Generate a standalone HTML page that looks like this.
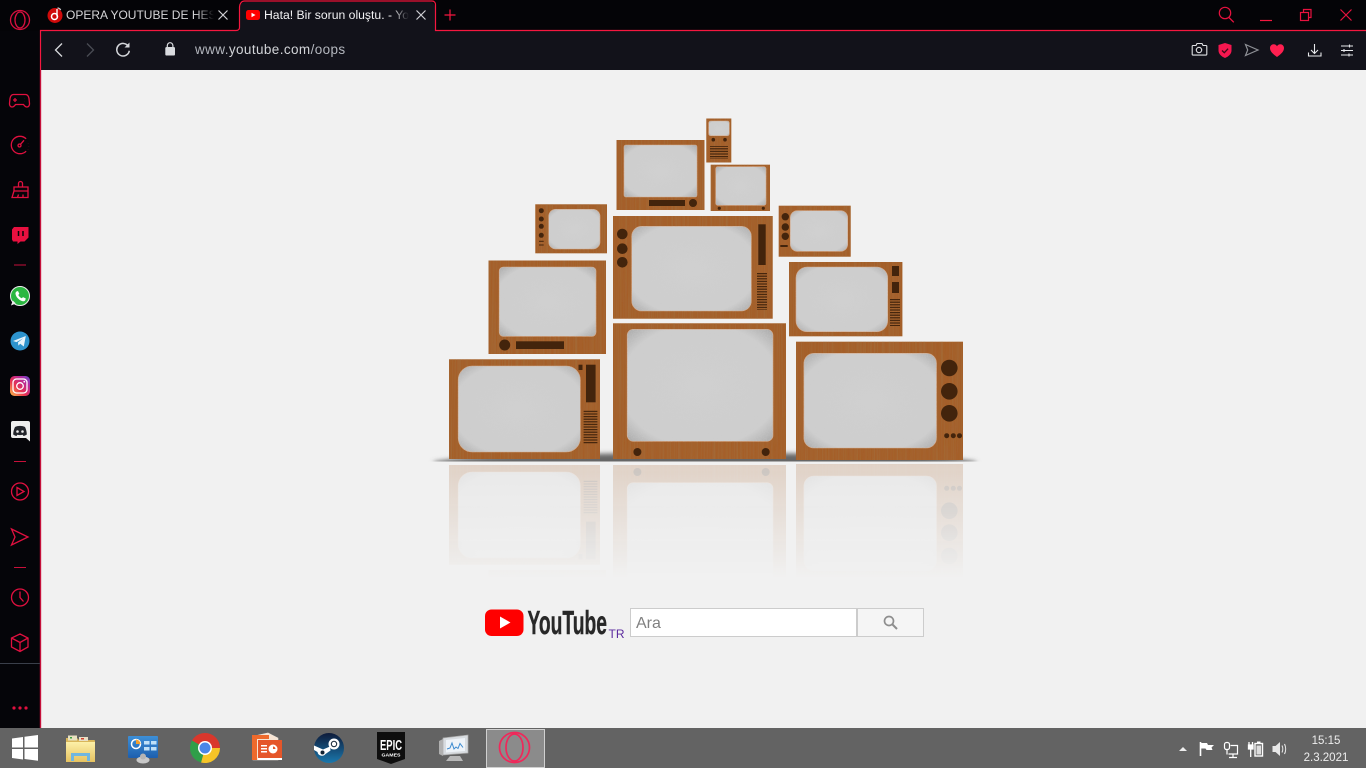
<!DOCTYPE html>
<html><head><meta charset="utf-8"><style>
html,body{margin:0;padding:0;width:1366px;height:768px;overflow:hidden;background:#f1f1f1;font-family:"Liberation Sans",sans-serif}
div{position:absolute;white-space:nowrap}
svg{position:absolute;left:0;top:0}
</style></head><body>
<div style="left:0;top:0;width:1366px;height:31px;background:#040407"></div>
<div style="left:0;top:31px;width:41px;height:697px;background:#050509"></div>
<div style="left:41px;top:31px;width:1325px;height:39px;background:#12121a"></div>
<div style="left:41px;top:70px;width:1325px;height:658px;background:#f1f1f1"></div>
<div style="left:0;top:728px;width:1366px;height:40px;background:#636363"></div>
<div style="left:240px;top:2px;width:195px;height:30px;background:#12121a;border-radius:5px 5px 0 0"></div>
<div style="left:486px;top:729px;width:57px;height:37px;background:#8b8b8b;border:1px solid #d0d0d0"></div>

<svg width="1366" height="768" viewBox="0 0 1366 768" xmlns="http://www.w3.org/2000/svg">
<defs>
<filter id="wood" filterUnits="userSpaceOnUse" x="420" y="100" width="570" height="380">
<feTurbulence type="fractalNoise" baseFrequency="0.7 0.007" numOctaves="2" seed="4" result="n"/>
<feColorMatrix in="n" type="matrix" values="0 0 0 0 0.36  0 0 0 0 0.17  0 0 0 0 0.05  1.2 0 0 0 -0.45" result="d"/>
<feComposite in="d" in2="SourceAlpha" operator="in" result="c"/>
<feMerge><feMergeNode in="SourceGraphic"/><feMergeNode in="c"/></feMerge>
</filter>
<filter id="static" filterUnits="userSpaceOnUse" x="420" y="100" width="570" height="380">
<feTurbulence type="fractalNoise" baseFrequency="0.8" numOctaves="2" seed="9" result="n"/>
<feColorMatrix in="n" type="matrix" values="0 0 0 0 0.62  0 0 0 0 0.62  0 0 0 0 0.62  0.7 0 0 0 -0.28" result="d"/>
<feComposite in="d" in2="SourceAlpha" operator="in" result="c"/>
<feMerge><feMergeNode in="SourceGraphic"/><feMergeNode in="c"/></feMerge>
</filter>
<filter id="bl" x="-5%" y="-100%" width="110%" height="300%"><feGaussianBlur stdDeviation="2.5"/></filter>
<radialGradient id="scr" cx="50%" cy="50%" r="72%"><stop offset="0" stop-color="#d0d0d0"/><stop offset=".76" stop-color="#cecece"/><stop offset="1" stop-color="#a6a6a6"/></radialGradient>
<pattern id="spk" patternUnits="userSpaceOnUse" width="20" height="2.6"><rect width="20" height="1.2" fill="#43240c"/></pattern>
<linearGradient id="rf" gradientUnits="userSpaceOnUse" x1="0" y1="462" x2="0" y2="578"><stop offset="0" stop-color="#fff" stop-opacity=".22"/><stop offset=".45" stop-color="#fff" stop-opacity=".12"/><stop offset="1" stop-color="#fff" stop-opacity="0"/></linearGradient>
<mask id="rm" maskUnits="userSpaceOnUse" x="420" y="460" width="570" height="140"><rect x="420" y="460" width="570" height="140" fill="url(#rf)"/></mask>
<clipPath id="shc"><rect x="400" y="440" width="610" height="21.5"/></clipPath>
<linearGradient id="ig" x1="0" y1="1" x2="1" y2="0"><stop offset="0" stop-color="#fdc14a"/><stop offset=".4" stop-color="#e8304f"/><stop offset=".75" stop-color="#b32aa0"/><stop offset="1" stop-color="#5a4fd0"/></linearGradient>
<linearGradient id="fd" x1="0" y1="0" x2="0" y2="1"><stop offset="0" stop-color="#fdf0a8"/><stop offset="1" stop-color="#e6c260"/></linearGradient>
<linearGradient id="st" x1="0" y1="0" x2="0" y2="1"><stop offset="0" stop-color="#0e1b3a"/><stop offset="1" stop-color="#1a78ad"/></linearGradient>
<linearGradient id="cp" x1="0" y1="0" x2="0" y2="1"><stop offset="0" stop-color="#3d8fd8"/><stop offset="1" stop-color="#1d5fae"/></linearGradient>
<g id="tvs">
<g filter="url(#wood)" fill="#a55e29">
<rect x="616.5" y="140" width="88" height="70"/>
<rect x="706.3" y="118.5" width="25" height="44"/>
<rect x="710.7" y="164.7" width="59.3" height="46.3"/>
<rect x="535.3" y="204.3" width="71.7" height="49"/>
<rect x="613" y="216" width="159.7" height="102.7"/>
<rect x="778.7" y="205.7" width="72" height="51"/>
<rect x="488.5" y="260.5" width="117.5" height="93.5"/>
<rect x="789" y="262" width="113.4" height="74.3"/>
<rect x="449" y="359.3" width="151" height="99.7"/>
<rect x="613" y="323.3" width="173" height="135.7"/>
<rect x="796" y="341.7" width="167" height="118.3"/>
</g>
<g filter="url(#static)" fill="url(#scr)" stroke="#d5ab8c" stroke-width=".6">
<rect x="624" y="145" width="73" height="52" rx="2"/>
<rect x="708.7" y="121" width="20.6" height="14.7" rx="2"/>
<rect x="715.7" y="166.7" width="50.3" height="38.6" rx="2"/>
<rect x="548.7" y="209.3" width="51.3" height="39.7" rx="7"/>
<rect x="631.7" y="226.3" width="119.6" height="84.7" rx="10"/>
<rect x="790.3" y="210.7" width="57.4" height="40.6" rx="7"/>
<rect x="499.2" y="267" width="96.8" height="69.3" rx="4"/>
<rect x="796" y="267" width="91.7" height="64.7" rx="11"/>
<rect x="458.2" y="366" width="122.1" height="86" rx="14"/>
<rect x="627.2" y="329.3" width="145.8" height="112" rx="6"/>
<rect x="803.9" y="353.3" width="132.6" height="94.7" rx="10"/>
</g>
<g fill="#43240c">
<rect x="649" y="200" width="36" height="6"/><circle cx="693" cy="203" r="4"/>
<circle cx="713.3" cy="139.7" r="1.8"/><circle cx="725" cy="139.7" r="1.8"/>
<rect x="710" y="146" width="18" height="13" fill="url(#spk)"/>
<circle cx="719.3" cy="208.3" r="1.6"/><circle cx="763.3" cy="208.3" r="1.6"/>
<circle cx="541.3" cy="210.7" r="2.5"/><circle cx="541.3" cy="219" r="2.5"/><circle cx="541.3" cy="226.3" r="2.5"/><circle cx="541.3" cy="235.3" r="2.5"/>
<rect x="539" y="240.8" width="4.7" height="1"/><rect x="539" y="244.5" width="4.7" height="1"/>
<circle cx="622.3" cy="234" r="5.3"/><circle cx="622.3" cy="248.7" r="5.3"/><circle cx="622.3" cy="262.3" r="5.3"/>
<rect x="758.3" y="224.3" width="7.4" height="40.7"/>
<rect x="757" y="273" width="10" height="37" fill="url(#spk)"/>
<circle cx="785.3" cy="216.7" r="3.7"/><circle cx="785.3" cy="227" r="3.7"/><circle cx="785.3" cy="236.3" r="3.7"/>
<rect x="780.3" y="245" width="7.4" height="2"/>
<circle cx="504.7" cy="345" r="5.5"/><rect x="516" y="341.3" width="48" height="7.7"/>
<rect x="892" y="266" width="7" height="10"/><rect x="892" y="282" width="7" height="11"/>
<rect x="890" y="299" width="10" height="27" fill="url(#spk)"/>
<rect x="578.5" y="364.7" width="4" height="5.3"/>
<rect x="586" y="364.7" width="9.6" height="37.6"/>
<rect x="583.6" y="409.7" width="13.8" height="34.3" fill="url(#spk)"/>
<circle cx="637.4" cy="452" r="4"/><circle cx="765.7" cy="452" r="4"/>
<circle cx="949.3" cy="368" r="8.3"/><circle cx="949.3" cy="391.3" r="8.3"/><circle cx="949.3" cy="413.3" r="8.3"/>
<circle cx="946.7" cy="435.7" r="2.5"/><circle cx="953.3" cy="435.7" r="2.5"/><circle cx="959.5" cy="435.7" r="2.5"/>
</g>
</g>
</defs>

<!-- shadow + tvs -->
<g clip-path="url(#shc)"><ellipse cx="705" cy="463" rx="272" ry="10" fill="#666" filter="url(#bl)"/></g>
<use href="#tvs"/>
<g mask="url(#rm)"><use href="#tvs" transform="translate(0,924) scale(1,-1)"/></g>

<!-- chrome lines -->
<path d="M40.5 728V30.5H236c2 0 3.5-1 3.5-3V7c0-3 2-6 5-6H432c2 0 3.5 1.500 3.500 3.500V30.500H1366" fill="none" stroke="#f5173f" stroke-width="1.200"/>
<path d="M40.500 70V728" stroke="#c5103a" stroke-width="1.200"/>

<!-- Opera logo -->
<g fill="none" stroke="#d8103f" stroke-width="1.300"><circle cx="20" cy="20" r="9.500"/><ellipse cx="20" cy="20" rx="5" ry="8"/></g>

<!-- tab 1 icon -->
<circle cx="55" cy="15.500" r="7.500" fill="#cf0a0a"/>
<circle cx="54.500" cy="16.500" r="3" fill="none" stroke="#fff" stroke-width="1.500"/>
<path d="M57 16.500V9" fill="none" stroke="#fff" stroke-width="1.400"/><path d="M57.500 8c1.200 0 2.400.7 3.200 2" fill="none" stroke="#ccc" stroke-width="1.200"/>
<path d="M218.500 10.500l9 9m0-9l-9 9M416.500 10.500l9 9m0-9l-9 9" stroke="#d0d0d4" stroke-width="1.200" fill="none"/>
<!-- tab 2 icon -->
<rect x="246" y="10" width="14" height="10" rx="2.500" fill="#f00"/><path d="M251.500 12.700v4.600l4-2.300z" fill="#fff"/>
<!-- plus -->
<path d="M450 9.500v11M444.500 15h11" stroke="#f5173f" stroke-width="1.200"/>

<!-- toolbar left -->
<path d="M62 43.500l-6.500 6.500 6.500 6.500" fill="none" stroke="#d8dade" stroke-width="1.300"/>
<path d="M87 43.500l6.500 6.500-6.500 6.500" fill="none" stroke="#4a4c54" stroke-width="1.300"/>
<path d="M128.500 46.500a6.300 6.300 0 1 0 .8 4.200" fill="none" stroke="#d4d6da" stroke-width="1.500"/><path d="M129.500 42.500v5h-5z" fill="#d4d6da"/>
<rect x="165.300" y="47" width="9.700" height="8.500" rx="1.300" fill="#d8dade"/><path d="M167.300 47v-1.500a2.800 2.800 0 0 1 5.600 0V47" fill="none" stroke="#d8dade" stroke-width="1.200"/>

<!-- window controls -->
<circle cx="1225" cy="13" r="5.700" fill="none" stroke="#e8123f" stroke-width="1.200"/><path d="M1229 17.500l4.800 4.800" stroke="#e8123f" stroke-width="1.300"/>
<path d="M1260 20.500h12" stroke="#f5173f" stroke-width="1.200"/>
<g fill="none" stroke="#e8123f" stroke-width="1.200"><rect x="1300.500" y="12.500" width="8" height="8"/><path d="M1303.500 12.500v-3h7.500v8h-2.500"/></g>
<path d="M1340.500 9.500l11 11m0-11l-11 11" stroke="#e8123f" stroke-width="1.200"/>

<!-- toolbar right -->
<g fill="none" stroke="#e0e1e4" stroke-width="1.100"><path d="M1193 45.500h3l1-2h5l1 2h3a.800.800 0 0 1 .8.800v8a.800.800 0 0 1-.8.800h-13a.800.800 0 0 1-.8-.8v-8a.800.800 0 0 1 .8-.8z"/><circle cx="1199" cy="50" r="2.700"/></g>
<path d="M1225 43l6.500 2v5.500c0 3.500-3 6-6.500 7.500-3.500-1.500-6.500-4-6.500-7.500V45z" fill="#f5174f"/><path d="M1222 50.500l2.300 2.200 3.800-4" fill="none" stroke="#3a0a18" stroke-width="1.300"/>
<path d="M1245.500 44.500l12.500 5.500-12.500 5.500 2.200-5.500z" fill="none" stroke="#8e9096" stroke-width="1.200"/>
<path d="M1277 57c-4-3-7-5.500-7-9 0-2.200 1.700-3.800 3.600-3.800 1.500 0 2.700.8 3.400 2 .7-1.200 1.900-2 3.400-2 1.900 0 3.600 1.600 3.600 3.800 0 3.500-3 6-7 9z" fill="#ff1f50"/>
<g fill="none" stroke="#e8e9ec" stroke-width="1.100"><path d="M1314.500 44v9M1311 50l3.500 3.500 3.500-3.500M1308.500 52.500v3.500h12.500v-3.500"/><path d="M1341 46h12M1341 50.500h12M1341 55h12"/></g>
<path d="M1349.500 44.500v3M1344 49v3M1349 53.500v3" stroke="#e8e9ec" stroke-width="1.100"/>

<!-- sidebar -->
<g fill="none" stroke="#e0103f" stroke-width="1.300">
<path d="M14.500 94.500h11c2 0 3 1.500 3.500 4l.5 5c.2 2-1 3.500-2.500 3.500s-2.500-1-3.500-2.500h-8c-1 1.500-2 2.500-3.500 2.500s-2.700-1.500-2.500-3.500l.5-5c.5-2.500 1.500-4 3.500-4z"/>
<path d="M15 98v4M13 100h4M24.500 98.500h.1M24.500 101.500h.1"/>
<path d="M26.150 138.850a8.700 8.700 0 1 0 0 12.300M28.300 143v.1M28.700 146v.1M28 149v.1"/>
<circle cx="19.500" cy="145.500" r="1.500"/><path d="M20.500 144.300l3.500-4"/>
<path d="M18.500 187v-3.500a2 2 0 0 1 4 0V187M14 187h14v4H14zM14 191l-2 6.500h16v-6.500M17.500 197.500l1-3M23 197.500v-3"/>
<circle cx="20" cy="491.500" r="8.500"/><path d="M17 487.500l7 4-7 4z"/>
<path d="M11.500 529l16.500 8-16.500 8 3.500-8z"/>
<circle cx="20" cy="597.500" r="8.500"/><path d="M20 591.500v6l3.500 4"/>
<path d="M20 634l8 4v9l-8 4.500-8.500-4.500v-9zM11.500 638l8.500 4.500 8-4.500M20 642.500v9"/>
</g>
<path d="M14 227h14.500v10.500l-4 4h-4l-3 2.500v-2.500h-4.500l-1-2v-10z" fill="#e8103f"/>
<path d="M18.500 231v5M23 231v5" stroke="#050509" stroke-width="1.500"/>
<path d="M14 265h12M14 461.500h12M14 567.500h12" stroke="#c8103a" stroke-width="1"/>

<circle cx="20" cy="296" r="9.500" fill="#2bb741" stroke="#eee" stroke-width="1"/><path d="M11 305.500l1.800-5 3 3z" fill="#eee"/>
<path d="M16.500 291.500l1.500-.5 1.300 2.800-1 1.200c.8 1.500 2 2.700 3.500 3.300l1.200-1.200 2.800 1.400-.5 1.600c-.4 1-1.500 1.300-2.500 1.100-3.500-.6-6.800-4-7.300-7.300-.1-1 .3-2 1-2.400z" fill="#fff"/>

<circle cx="20" cy="341" r="9.500" fill="#2d93cd"/><path d="M13 341l12.800-5-2 10.500-3.600-2.700-1.800 1.800-.4-3.200 5.500-4.300-7 4z" fill="#e8f4fb"/>

<rect x="10" y="376" width="20" height="20" rx="4.500" fill="url(#ig)"/><rect x="13" y="379" width="14" height="14" rx="3.500" fill="none" stroke="#fff" stroke-width="1.300"/><circle cx="20" cy="386" r="3.300" fill="none" stroke="#fff" stroke-width="1.300"/><circle cx="24.300" cy="381.700" r=".9" fill="#fff"/>

<path d="M13 421h15a2 2 0 0 1 2 2v18.500l-4-3.500H13a2 2 0 0 1-2-2v-13a2 2 0 0 1 2-2z" fill="#eeeeee"/>
<path d="M15 427c3-1.500 7-1.500 10 0 1.200 2.500 1.800 5 1.800 7.500-1 .8-2 1.200-3.300 1.500l-.8-1.300c-2 .5-3.400.5-5.400 0l-.8 1.300c-1.300-.3-2.300-.7-3.300-1.500 0-2.500.6-5 1.800-7.500z" fill="#23252b"/><circle cx="17.500" cy="431.500" r="1.300" fill="#eee"/><circle cx="22.500" cy="431.500" r="1.300" fill="#eee"/>

<path d="M0 663.500h40" stroke="#3a3f4a" stroke-width="1"/>
<g fill="#e0103f"><circle cx="14" cy="708" r="1.600"/><circle cx="20" cy="708" r="1.600"/><circle cx="26" cy="708" r="1.600"/></g>

<!-- youtube logo -->
<rect x="485" y="609.500" width="38.500" height="26.500" rx="6.500" fill="#f00"/><path d="M500 616.500v12l10.500-6z" fill="#fff"/>
<text x="527.500" y="634" font-family="'Liberation Sans',sans-serif" font-weight="700" font-size="33" fill="#282828" stroke="#282828" stroke-width=".4" textLength="79.500" lengthAdjust="spacingAndGlyphs">YouTube</text>
<text x="608.500" y="638" font-family="'Liberation Sans',sans-serif" font-size="12" fill="#5b2a9e">TR</text>
<rect x="630.500" y="608.500" width="226" height="28" fill="#fff" stroke="#ccc"/>
<rect x="857.500" y="608.500" width="66" height="28" fill="#f5f5f5" stroke="#ccc"/>
<text x="636" y="628" font-family="'Liberation Sans',sans-serif" font-size="16" fill="#808080">Ara</text>
<circle cx="889" cy="621" r="4.500" fill="none" stroke="#8e8e8e" stroke-width="1.700"/><path d="M892.500 624.500l4.500 4.500" stroke="#8e8e8e" stroke-width="2"/>

<!-- taskbar -->
<path d="M12 738.500l11-1.500v10.500H12zM24.500 736.800L38 735v12.500H24.500zM12 749h11v10.500l-11-1.500zM24.500 749H38v11.800l-13.500-1.800z" fill="#fff"/>

<path d="M66 738h11l2 2h15a1 1 0 0 1 1 1v20H66z" fill="#d9b65a"/><rect x="68" y="735.500" width="9" height="5" fill="#e8e2c0"/><rect x="79" y="737" width="9" height="4" fill="#e9dfc4"/><rect x="70" y="737" width="2" height="1.500" fill="#3aa040"/><rect x="81" y="738" width="3" height="1.500" fill="#d04030"/>
<rect x="66" y="742" width="29" height="20" fill="url(#fd)"/><path d="M71 761v-8h19v8h-3v-5H74v5z" fill="#6fb6e0"/>

<rect x="128" y="736" width="30" height="22" rx="1" fill="url(#cp)"/><circle cx="136" cy="744" r="4.500" fill="none" stroke="#fff" stroke-width="1.500"/><path d="M136 744v-4.500a4.500 4.500 0 0 1 4.500 4.500z" fill="#f2a030"/><rect x="144" y="741" width="5.500" height="3.500" fill="#bfe0f8"/><rect x="151" y="741" width="5.500" height="3.500" fill="#bfe0f8"/><rect x="144" y="747" width="5.500" height="3.500" fill="#bfe0f8"/><rect x="151" y="747" width="5.500" height="3.500" fill="#bfe0f8"/><ellipse cx="143" cy="760" rx="6.500" ry="3.500" fill="#c8c8c8"/><circle cx="143" cy="756.500" r="3" fill="#b4b4b4"/>

<path d="M205 748L192 740.500A15 15 0 0 1 220 748z" fill="#d9372c"/><path d="M205 748L220 748A15 15 0 0 1 201 762.500z" fill="#f6c427"/><path d="M205 748L201 762.500A15 15 0 0 1 192 740.500z" fill="#2f9e49"/><circle cx="205" cy="748" r="7" fill="#fff"/><circle cx="205" cy="748" r="5.500" fill="#4a86e8"/>

<path d="M254 736l14-3 10 5v22h-25z" fill="#f7e4d4" stroke="#e8e0d8" stroke-width=".6"/><path d="M252 735h17v4h-12v21h-5z" fill="#ee6a2c"/><rect x="258" y="740" width="24" height="20" fill="#fff"/><rect x="258" y="740" width="24" height="18" fill="#e5562a"/><rect x="261" y="745" width="6" height="1.500" fill="#fff"/><rect x="261" y="748" width="6" height="1.500" fill="#fff"/><rect x="261" y="751" width="6" height="1.500" fill="#fff"/><circle cx="273" cy="749" r="4.500" fill="#fff"/><path d="M273 749v-2.500a2.500 2.500 0 0 1 2.500 2.500z" fill="#e5562a"/>

<circle cx="329" cy="748" r="15" fill="url(#st)"/><circle cx="334" cy="744" r="5.500" fill="#fff"/><circle cx="334" cy="744" r="3.200" fill="#123"/><circle cx="334" cy="744" r="2.200" fill="#fff"/><path d="M314 745.500l9 4 7-3 .5 4-5 3.500a4.500 4.500 0 0 1-8-2l-3.500-2z" fill="#fff"/><circle cx="322.500" cy="752.500" r="2" fill="#123"/>

<path d="M377 732h28v27l-14 5-14-5z" fill="#0e0e0e"/>
<text x="380" y="750" font-family="'Liberation Sans',sans-serif" font-weight="700" font-size="14.500" fill="#fff" textLength="22" lengthAdjust="spacingAndGlyphs">EPIC</text>
<text x="381.500" y="756.500" font-family="'Liberation Sans',sans-serif" font-weight="700" font-size="4.500" fill="#fff" textLength="19" lengthAdjust="spacingAndGlyphs">GAMES</text>

<path d="M443 738l25-3v18l-25 2z" fill="#d8dce0" stroke="#aaa" stroke-width=".7"/><path d="M446 740l19-2v13l-19 1.500z" fill="#eef3f8"/><path d="M447 749l3-1 2-5 2 6 2-2 2 1.500 2-5 3 4" fill="none" stroke="#3b8ad0" stroke-width="1"/><path d="M439 741l4-2v17l-4-2z" fill="#b0b0b0"/><path d="M450 756h10l3 5h-17z" fill="#b8b8b8"/>

<g fill="none" stroke="#f0285a" stroke-width="1.700"><circle cx="514.500" cy="747.500" r="15"/><ellipse cx="514.500" cy="747.500" rx="8.500" ry="13.500"/></g>

<!-- tray -->
<path d="M1179 751l4-4 4 4z" fill="#eee"/>
<path d="M1200.500 742v14" stroke="#fff" stroke-width="1.600"/><path d="M1201 743h6l1 2h6l-2.500 2.500 1 2.500h-6l-1-1.500h-4.500z" fill="#fff"/>
<g fill="none" stroke="#fff" stroke-width="1.200"><rect x="1224.500" y="742.500" width="5" height="7" rx="2"/><path d="M1227 749.500v5M1230.500 745.500h7v8.500h-9M1233 754v3M1229 757.500h8"/></g>
<g fill="none" stroke="#fff" stroke-width="1.400"><rect x="1255" y="743.500" width="7.500" height="12.500"/></g><rect x="1257" y="741.500" width="3.500" height="2" fill="#fff"/><rect x="1256.500" y="745.500" width="4.500" height="9" fill="#ddd"/><path d="M1249 742v3M1252.500 742v3M1248.500 745h4.500v4h-4.500zM1250.700 749v8" stroke="#fff" stroke-width="1.300" fill="#fff"/>
<path d="M1272.500 746h3l4.500-4v14l-4.500-4h-3z" fill="#e8e8e8"/><path d="M1282 745.500c1 2 1 5 0 7M1284.500 744c1.500 3 1.500 7 0 10" fill="none" stroke="#e8e8e8" stroke-width="1.100"/>
</svg>

<div style="left:66px;top:8px;width:148px;overflow:hidden;font-size:12px;line-height:15px;color:#d6d6d8;-webkit-mask-image:linear-gradient(90deg,#000 88%,transparent);mask-image:linear-gradient(90deg,#000 88%,transparent)">OPERA YOUTUBE DE HESAP</div>
<div style="left:264px;top:8px;width:145px;overflow:hidden;font-size:12.200px;line-height:15px;color:#f2f2f4;-webkit-mask-image:linear-gradient(90deg,#000 88%,transparent);mask-image:linear-gradient(90deg,#000 88%,transparent)">Hata! Bir sorun oluştu. - YouTube</div>
<div style="left:195px;top:42px;font-size:13.500px;line-height:16px;letter-spacing:.4px;color:#b4b7be">www.<span style="color:#d2d4d8">youtube.com</span>/oops</div>
<div style="left:1296px;top:734px;width:60px;text-align:center;font-size:11.500px;line-height:14px;color:#eee">15:15</div>
<div style="left:1296px;top:751px;width:60px;text-align:center;font-size:11.500px;line-height:14px;color:#eee">2.3.2021</div>
</body></html>
